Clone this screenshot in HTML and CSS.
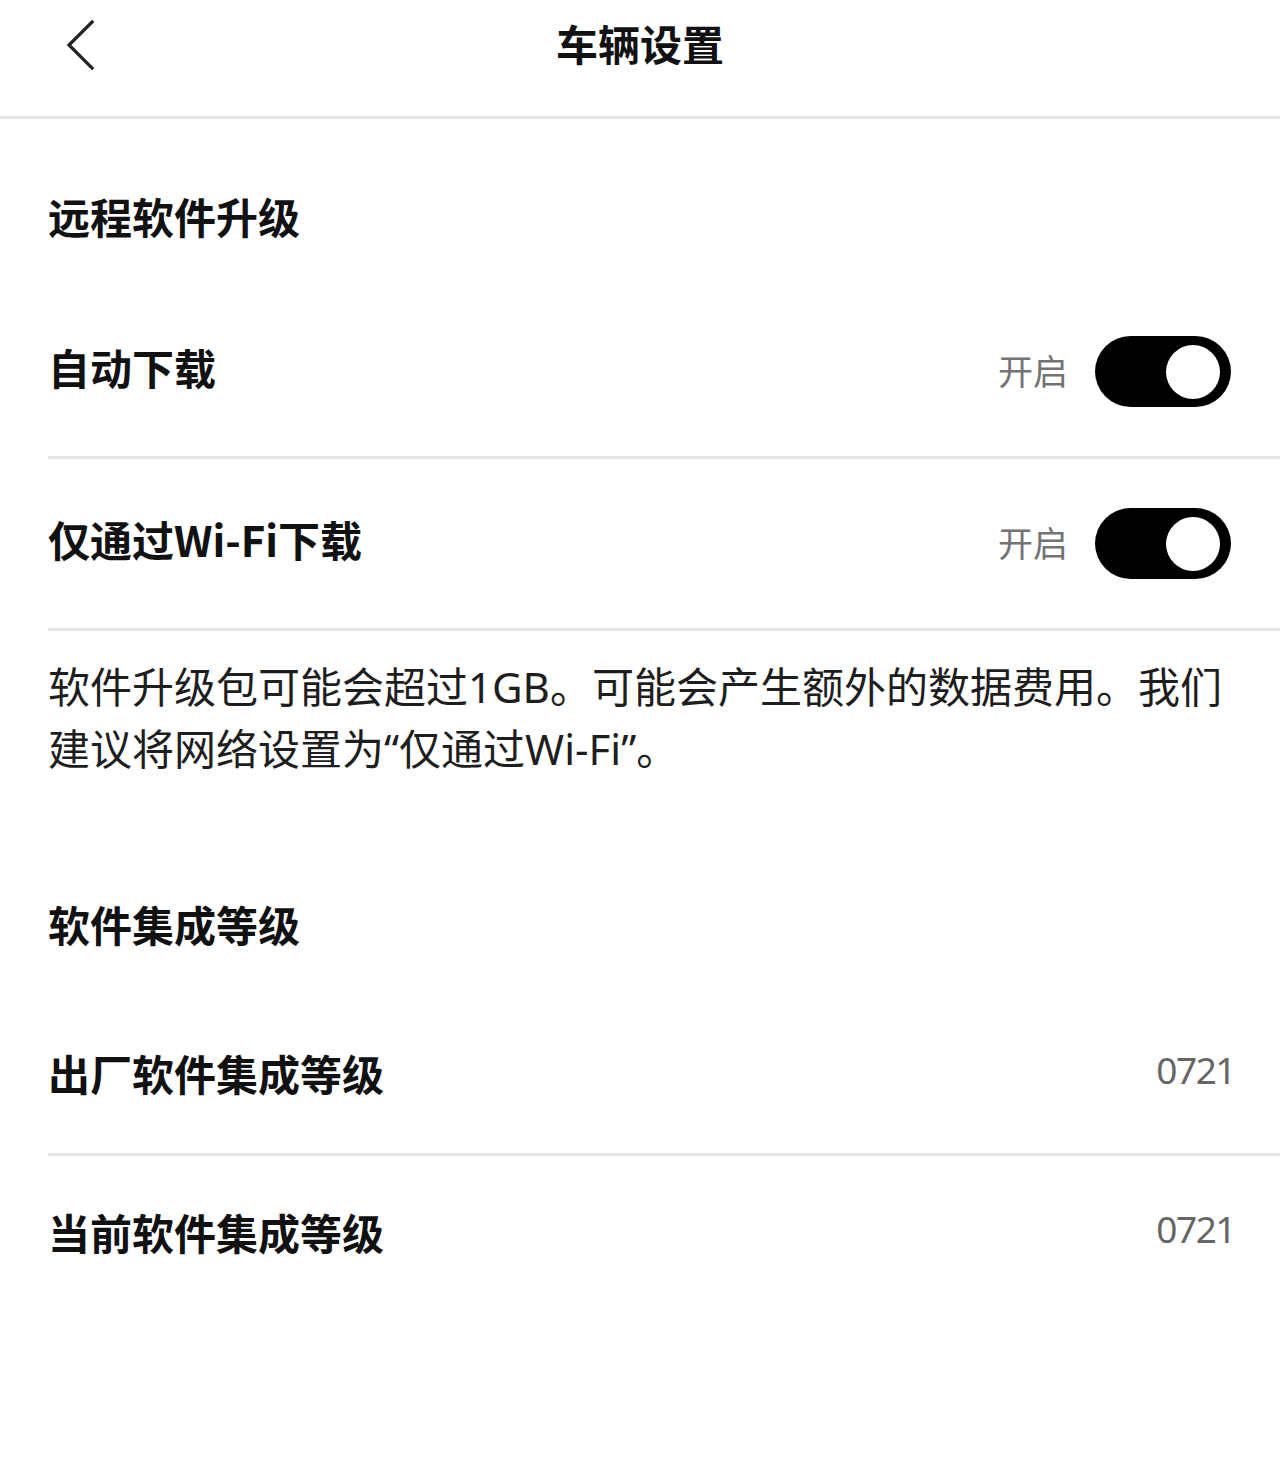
FILE: index.html
```html
<!DOCTYPE html>
<html lang="zh-CN">
<head>
<meta charset="utf-8">
<title>车辆设置</title>
<link rel="stylesheet" href="styles.css">
</head>
<body>
<header class="topbar">
  <div class="topbar-left">
    <svg class="back" width="40" height="60" viewBox="0 0 40 60" aria-hidden="true">
      <polyline points="33,7 10,30 33,53" fill="none" stroke="#222" stroke-width="3.2" stroke-linecap="square" stroke-linejoin="miter"/>
    </svg>
  </div>
  <h1 class="title">车辆设置</h1>
  <div class="topbar-right"></div>
</header>

<main>
  <h2 class="section-title first">远程软件升级</h2>

  <div class="row row-toggle">
    <span class="label">自动下载</span>
    <div class="control">
      <span class="state">开启</span>
      <span class="switch"><span class="knob"></span></span>
    </div>
  </div>
  <div class="row row-toggle">
    <span class="label">仅通过Wi-Fi下载</span>
    <div class="control">
      <span class="state">开启</span>
      <span class="switch"><span class="knob"></span></span>
    </div>
  </div>

  <p class="note">软件升级包可能会超过1GB。可能会产生额外的数据费用。我们建议将网络设置为“仅通过Wi-Fi”。</p>

  <h2 class="section-title second">软件集成等级</h2>

  <div class="row row-value">
    <span class="label">出厂软件集成等级</span>
    <span class="value">0721</span>
  </div>
  <div class="row row-value last">
    <span class="label">当前软件集成等级</span>
    <span class="value">0721</span>
  </div>
</main>
</body>
</html>
```

FILE: styles.css
```css
* { box-sizing: border-box; }

html, body {
  margin: 0;
  padding: 0;
  background: #ffffff;
}

body {
  font-family: "Noto Sans CJK SC", "Noto Sans", sans-serif;
  color: #111111;
}

.topbar {
  height: 119px;
  border-bottom: 3px solid #e6e6e6;
  display: grid;
  grid-template-columns: 1fr auto 1fr;
  align-items: start;
  padding-top: 15px;
}

.topbar-left {
  padding-left: 59px;
  display: flex;
}

.back {
  display: block;
}

.title {
  margin: 0;
  font-size: 42px;
  font-weight: 700;
  line-height: 56px;
  color: #111111;
}

.section-title {
  margin: 0;
  padding-left: 48px;
  font-size: 42px;
  font-weight: 700;
  line-height: 50px;
  color: #111111;
}

.section-title.first {
  padding-top: 72px;
  height: 168px;
}

.section-title.second {
  padding-top: 120px;
  height: 217px;
}

.row {
  margin-left: 48px;
  padding-right: 49px;
  display: flex;
  align-items: center;
  justify-content: space-between;
  border-bottom: 3px solid #e6e6e6;
}

.row-toggle {
  height: 172px;
}

.row-value {
  height: 160px;
  padding-right: 45px;
}

.row-value.last {
  height: 155px;
  border-bottom: none;
}

.label {
  font-size: 42px;
  font-weight: 700;
  line-height: 50px;
  color: #111111;
  margin-top: -4px;
}

.row-toggle .label {
  margin-top: -10px;
}

.control {
  display: flex;
  align-items: center;
  gap: 27px;
}

.state {
  font-size: 35px;
  line-height: 40px;
  color: #737373;
  margin-top: -3px;
}

.switch {
  width: 136px;
  height: 71px;
  border-radius: 36px;
  background: #000000;
  display: flex;
  align-items: center;
  justify-content: flex-end;
  padding-right: 11px;
}

.knob {
  width: 54px;
  height: 54px;
  border-radius: 50%;
  background: #ffffff;
}

.note {
  margin: 0;
  padding: 25px 48px 0 48px;
  height: 148px;
  font-family: "Noto Sans", "Noto Sans CJK SC", sans-serif;
  font-size: 42px;
  line-height: 62px;
  color: #1e1e1e;
}

.value {
  font-family: "Noto Sans", sans-serif;
  font-size: 37px;
  line-height: 44px;
  letter-spacing: -1.5px;
  color: #666666;
  margin-top: -10px;
}
```
